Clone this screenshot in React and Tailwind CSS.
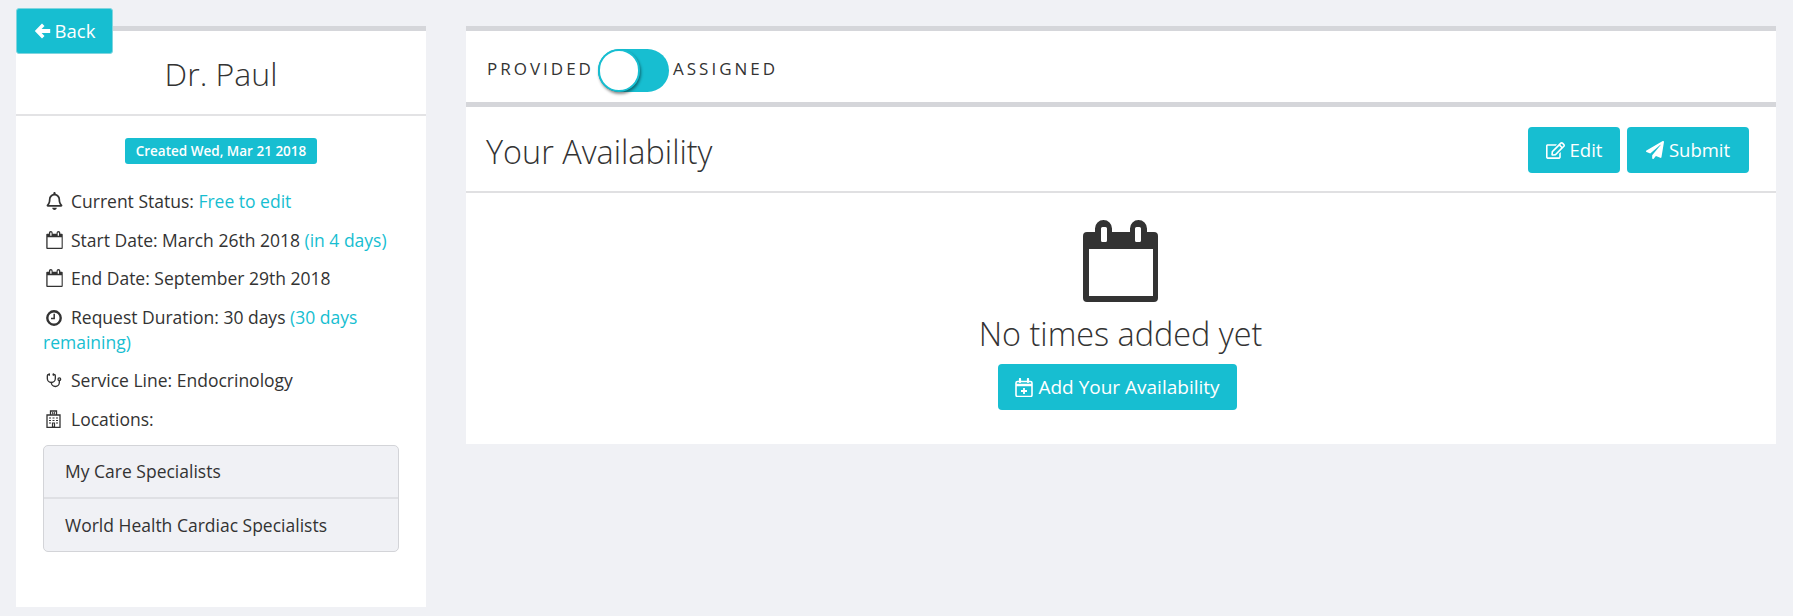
import { FaRegBell, FaRegEdit, FaPaperPlane } from "react-icons/fa";
import { Stethoscope } from "lucide-react";

// fa-calendar-o style glyph, also used small in the details list
function CalendarIcon({ className }) {
  return (
    <svg viewBox="0 0 75 82" className={className} fill="currentColor" fillRule="evenodd">
      <path d="M4 12H12V8.5a8.5 8.5 0 0 1 17 0V12H47V8.5a8.5 8.5 0 0 1 17 0V12H71a4 4 0 0 1 4 4V78a4 4 0 0 1-4 4H4a4 4 0 0 1-4-4V16a4 4 0 0 1 4-4ZM6 29V76H70V29ZM19.5 7a1.5 1.5 0 0 0-1.5 1.5V20.500a1.500 1.500 0 0 0 1.500 1.500h3a1.500 1.500 0 0 0 1.500-1.500V8.500A1.500 1.500 0 0 0 22.500 7ZM53.500 7A1.500 1.500 0 0 0 52 8.500V20.500a1.500 1.500 0 0 0 1.500 1.500h3a1.500 1.500 0 0 0 1.500-1.500V8.500A1.500 1.500 0 0 0 56.500 7Z" />
    </svg>
  );
}

function CalendarPlusIcon({ className }) {
  return (
    <svg viewBox="0 0 18 19" className={className} fill="none" stroke="currentColor">
      <rect x="1" y="3.500" width="16" height="15" rx="1.500" strokeWidth="1.600" />
      <path d="M1 7H17" strokeWidth="2.500" />
      <path d="M5 1V4M13 1V4" strokeWidth="2.200" strokeLinecap="round" />
      <path d="M9 10V16M6 13H12" strokeWidth="1.800" />
    </svg>
  );
}

function ArrowLeftIcon({ className }) {
  return (
    <svg viewBox="0 0 17 16" className={className} fill="currentColor">
      <path d="M8 .5 .8 8 8 15.500 10.500 13 7.600 10H16.200V6H7.600L10.500 3Z" />
    </svg>
  );
}

function ClockIcon({ className }) {
  return (
    <svg viewBox="0 0 16 16" className={className} fill="none" stroke="currentColor">
      <circle cx="8" cy="8" r="6.700" strokeWidth="2.400" />
      <path d="M8.200 3.800V8.500H5" strokeWidth="1.500" />
    </svg>
  );
}

function HospitalIcon({ className }) {
  return (
    <svg viewBox="0 0 15 18" className={className} fill="none" stroke="currentColor">
      <path d="M1 17.500V5H14V17.500ZM4.500 5V1H10.500V5" strokeWidth="1.300" />
      <path d="M6.500 2V4.500M8.500 2V4.500M6.500 3.200H8.500" strokeWidth="0.800" />
      <path d="M3 8H5M6.500 8H8.500M10 8H12M3 10.500H5M6.500 10.500H8.500M10 10.500H12M3 13H5M10 13H12M6.500 13H8.500V17H6.500Z" strokeWidth="1.200" />
    </svg>
  );
}

function Row({ icon, children }) {
  return (
    <p className="mb-[13.5px] leading-[25px]">
      <span className="inline-flex w-[28px] align-[-2px] pl-[3px]">{icon}</span>
      {children}
    </p>
  );
}

function ActionButton({ className, children }) {
  return (
    <button className={`flex items-center justify-center rounded-[4px] bg-[#17bed1] text-white text-[18.5px] h-[46px] ${className}`}>
      {children}
    </button>
  );
}

export default function App() {
  return (
    <div
      className="relative min-h-[616px] bg-[#f0f1f5] text-[#333] pt-[26px] pl-[16px] pr-[17px] flex gap-[40px] items-start"
      style={{ fontFamily: '"Open Sans", sans-serif' }}
    >
      <button className="absolute left-[16px] top-[8px] w-[97px] h-[46px] flex items-center justify-center gap-[4px] rounded-[3px] bg-[#17bed1] border border-[#7fd5df] text-white text-[18.5px]">
        <ArrowLeftIcon className="w-[17px] h-[16px]" />
        Back
      </button>

      <aside className="w-[410px] h-[581px] shrink-0 bg-white border-t-[5px] border-[#d5d6da]">
        <div className="h-[85px] border-b-2 border-[#e3e3e5] flex items-center justify-center pt-[2px]">
          <h1 className="text-[32px] font-light text-[#333]">Dr. Paul</h1>
        </div>
        <div className="flex justify-center mt-[22px]">
          <span className="h-[26px] w-[192px] flex items-center justify-center rounded-[3px] bg-[#17bed1] text-white text-[13.5px] font-semibold">
            Created Wed, Mar 21 2018
          </span>
        </div>
        <div className="mt-[25px] pl-[27px] pr-[24px] text-[17.5px] text-[#333]">
          <Row icon={<FaRegBell className="w-[17px] h-[18px]" />}>
            Current Status: <span className="text-[#17bed1]">Free to edit</span>
          </Row>
          <Row icon={<CalendarIcon className="w-[17px] h-[18px]" />}>
            Start Date: March 26th 2018 <span className="text-[#17bed1]">(in 4 days)</span>
          </Row>
          <Row icon={<CalendarIcon className="w-[17px] h-[18px]" />}>
            End Date: September 29th 2018
          </Row>
          <Row icon={<ClockIcon className="w-[16px] h-[16px]" />}>
            Request Duration: 30 days <span className="text-[#17bed1]">(30 days remaining)</span>
          </Row>
          <Row icon={<Stethoscope className="w-[16px] h-[17px]" />}>
            Service Line: Endocrinology
          </Row>
          <Row icon={<HospitalIcon className="w-[15px] h-[18px]" />}>
            Locations:
          </Row>
          <ul className="w-[356px] mt-[2px] rounded-[5px] border border-[#d3d4d8] bg-[#f0f1f5]">
            <li className="h-[53px] flex items-center pl-[21px] border-b-2 border-[#dfe0e4]">My Care Specialists</li>
            <li className="h-[52px] flex items-center pl-[21px]">World Health Cardiac Specialists</li>
          </ul>
        </div>
      </aside>

      <main className="flex-1 h-[418px] bg-white border-t-[5px] border-[#d5d6da]">
        <div className="h-[71px] flex items-center pl-[21px] pt-[8px] text-[17px] tracking-[3px] text-[#333]">
          <span className="w-[111px] -mt-[4px]">PROVIDED</span>
          <span className="relative w-[71px] h-[43px] rounded-full bg-[#17bed1] shrink-0">
            <span className="absolute left-0 top-0 w-[42px] h-[43px] rounded-full bg-white border-2 border-[#17bed1] shadow-[1px_2px_3px_rgba(0,0,0,0.45)]" />
          </span>
          <span className="ml-[4px] -mt-[4px]">ASSIGNED</span>
        </div>
        <div className="h-[91px] border-t-[5px] border-b-2 border-t-[#d5d6da] border-b-[#e0e0e2] flex items-center justify-between pl-[20px] pr-[27px]">
          <h2 className="text-[32.400px] font-light text-[#333] pt-[5px]">Your Availability</h2>
          <div className="flex gap-[7px] mt-[2px]">
            <ActionButton className="w-[92px] gap-[5px]">
              <FaRegEdit className="w-[19px] h-[17px]" />
              Edit
            </ActionButton>
            <ActionButton className="w-[122px] gap-[5px]">
              <FaPaperPlane className="w-[18px] h-[18px]" />
              Submit
            </ActionButton>
          </div>
        </div>
        <div className="flex flex-col items-center pt-[27px]">
          <CalendarIcon className="w-[75px] h-[82px] text-[#333] -ml-[1px]" />
          <p className="mt-[9px] text-[32.400px] leading-[44px] font-light text-[#333] -ml-[1px]">No times added yet</p>
          <ActionButton className="mt-[9px] w-[239px] gap-[5px] -ml-[7px] text-[19px]">
            <CalendarPlusIcon className="w-[18px] h-[19px]" />
            Add Your Availability
          </ActionButton>
        </div>
      </main>
    </div>
  );
}
